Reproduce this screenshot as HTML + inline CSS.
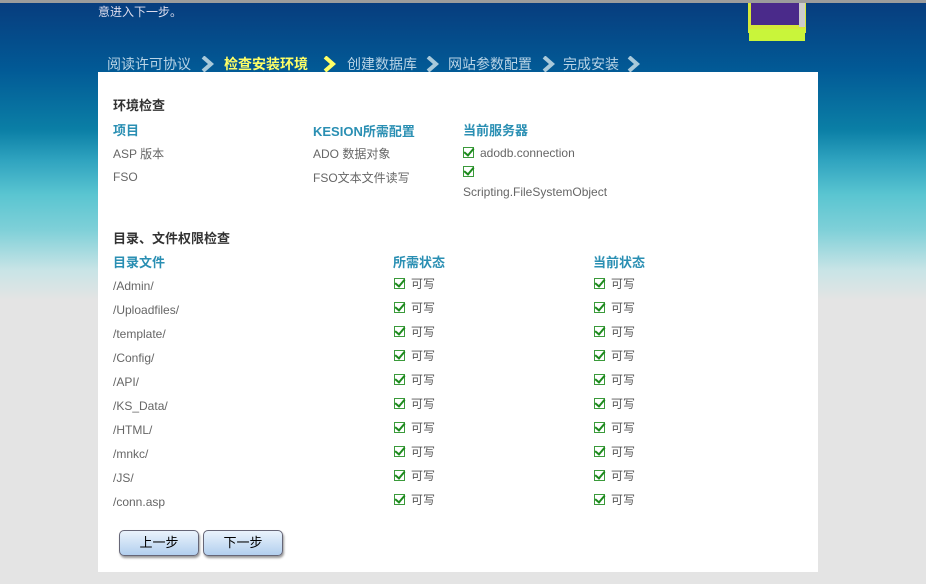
<!DOCTYPE html><html><head><meta charset="utf-8"><style>
body{margin:0;width:926px;height:584px;overflow:hidden;position:relative;font-family:"Liberation Sans","Noto Sans CJK SC",sans-serif;font-size:12px;color:#666;
background:linear-gradient(#9c9c9c 0,#9c9c9c 3px,#073d7e 3px,#025a96 70px,#0b7fa6 130px,#2fa3bf 160px,#5ac5d1 195px,#7fd0d8 230px,#c8e4e6 270px,#e4e4e4 300px,#e4e4e4 100%);}
.a{position:absolute;white-space:nowrap}
.panel{position:absolute;left:98px;top:72px;width:720px;height:500px;background:#fff}
.h{font-weight:bold;color:#333;font-size:13px}
.c{font-weight:bold;color:#2a8fb3;font-size:13px}
.ck{display:inline-block;width:11px;height:11px;border:1px solid #3a9a3a;box-sizing:border-box;position:relative;vertical-align:-1px;margin-right:6px}
.ck:after{content:"";position:absolute;left:2px;top:-2px;width:4px;height:8px;border:solid #1d8a1d;border-width:0 2.5px 2.5px 0;transform:rotate(40deg)}
.nav{font-size:14px;color:#b9d4e6;top:54px}
.arr{position:absolute;top:56px}
.btn{position:absolute;top:530px;width:78px;height:24px;border:1px solid #667;border-radius:5px;background:linear-gradient(#eaf3fc,#b2cfee);text-align:center;line-height:24px;color:#000;font-size:13px;box-shadow:1px 2px 2px #999}
</style></head><body>
<div class="a" style="left:98px;top:3px;color:#dde;font-size:12px">意进入下一步。</div>
<svg class="a" style="left:745px;top:3px" width="66" height="40"><rect x="3" y="0" width="58" height="30" fill="#d6e83a"/><rect x="6" y="0" width="48" height="22" fill="#4a2a8a"/><rect x="54" y="0" width="6" height="24" fill="#ccc"/><rect x="4" y="26" width="56" height="12" fill="#c9f53a"/></svg>
<div class="a nav" style="left:107px">阅读许可协议</div>
<div class="a nav" style="left:224px;color:#ffff66;font-weight:bold">检查安装环境</div>
<div class="a nav" style="left:347px">创建数据库</div>
<div class="a nav" style="left:448px">网站参数配置</div>
<div class="a nav" style="left:563px">完成安装</div>
<svg class="arr" style="left:200px" width="14" height="16"><path d="M3 1 L11 8 L3 15" fill="none" stroke="#a9c9da" stroke-width="4"/></svg>
<svg class="arr" style="left:322px" width="14" height="16"><path d="M3 1 L11 8 L3 15" fill="none" stroke="#ffff66" stroke-width="4"/></svg>
<svg class="arr" style="left:425px" width="14" height="16"><path d="M3 1 L11 8 L3 15" fill="none" stroke="#a9c9da" stroke-width="4"/></svg>
<svg class="arr" style="left:541px" width="14" height="16"><path d="M3 1 L11 8 L3 15" fill="none" stroke="#a9c9da" stroke-width="4"/></svg>
<svg class="arr" style="left:626px" width="14" height="16"><path d="M3 1 L11 8 L3 15" fill="none" stroke="#a9c9da" stroke-width="4"/></svg>
<div class="panel"></div>
<div class="a h" style="left:113px;top:95px">环境检查</div>
<div class="a c" style="left:113px;top:120px">项目</div>
<div class="a c" style="left:313px;top:121px">KESION所需配置</div>
<div class="a c" style="left:463px;top:120px">当前服务器</div>
<div class="a" style="left:113px;top:145px">ASP 版本</div>
<div class="a" style="left:313px;top:145px">ADO 数据对象</div>
<div class="a" style="left:463px;top:146px"><span class="ck"></span>adodb.connection</div>
<div class="a" style="left:113px;top:170px">FSO</div>
<div class="a" style="left:313px;top:169px">FSO文本文件读写</div>
<div class="a" style="left:463px;top:165px"><span class="ck"></span></div>
<div class="a" style="left:463px;top:185px">Scripting.FileSystemObject</div>
<div class="a h" style="left:113px;top:228px">目录、文件权限检查</div>
<div class="a c" style="left:113px;top:252px">目录文件</div>
<div class="a c" style="left:393px;top:252px">所需状态</div>
<div class="a c" style="left:593px;top:252px">当前状态</div>
<div class="a" style="left:113px;top:274px;line-height:24px">/Admin/<br>/Uploadfiles/<br>/template/<br>/Config/<br>/API/<br>/KS_Data/<br>/HTML/<br>/mnkc/<br>/JS/<br>/conn.asp</div>
<div class="a" style="left:394px;top:272px;line-height:24px;color:#555"><span class="ck"></span>可写<br><span class="ck"></span>可写<br><span class="ck"></span>可写<br><span class="ck"></span>可写<br><span class="ck"></span>可写<br><span class="ck"></span>可写<br><span class="ck"></span>可写<br><span class="ck"></span>可写<br><span class="ck"></span>可写<br><span class="ck"></span>可写</div>
<div class="a" style="left:594px;top:272px;line-height:24px;color:#555"><span class="ck"></span>可写<br><span class="ck"></span>可写<br><span class="ck"></span>可写<br><span class="ck"></span>可写<br><span class="ck"></span>可写<br><span class="ck"></span>可写<br><span class="ck"></span>可写<br><span class="ck"></span>可写<br><span class="ck"></span>可写<br><span class="ck"></span>可写</div>
<div class="btn" style="left:119px">上一步</div>
<div class="btn" style="left:203px">下一步</div>
</body></html>
